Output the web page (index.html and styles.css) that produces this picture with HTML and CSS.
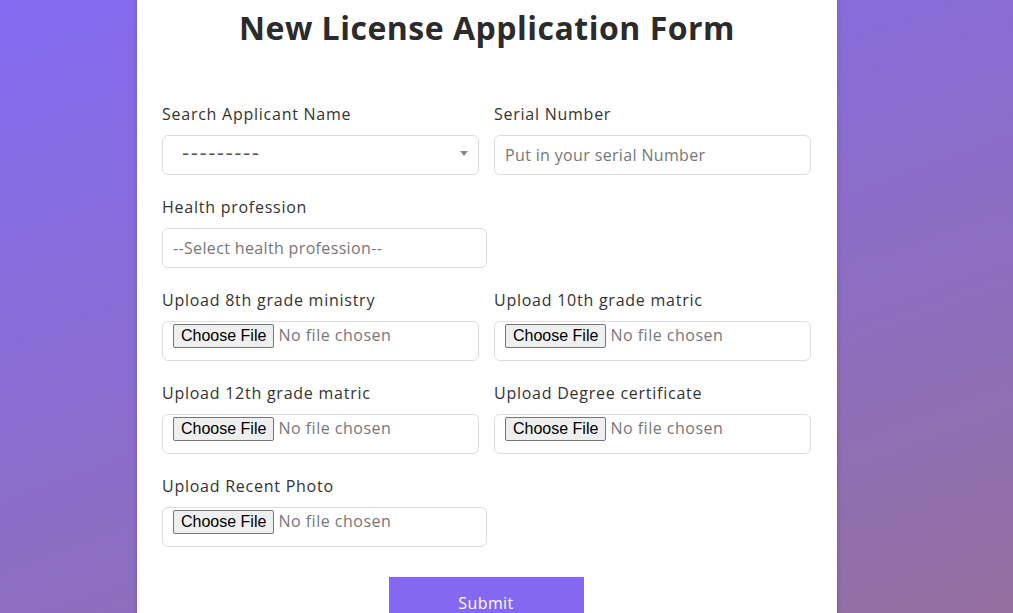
FILE: index.html
```html
<!DOCTYPE html>
<html lang="en">
<head>
<meta charset="utf-8">
<title>New License Application Form</title>
<link rel="stylesheet" href="styles.css">
</head>
<body>
<div class="page">
  <div class="card">
    <h1 class="title">New License Application Form</h1>
    <form class="form">
      <div class="row">
        <div class="field">
          <label class="label">Search Applicant Name</label>
          <div class="select-box">
            <span class="select-text">---------</span>
            <span class="select-arrow"></span>
          </div>
        </div>
        <div class="field">
          <label class="label">Serial Number</label>
          <input class="control" type="text" placeholder="Put in your serial Number">
        </div>
      </div>
      <div class="row single">
        <div class="field">
          <label class="label">Health profession</label>
          <input class="control" type="text" placeholder="--Select health profession--">
        </div>
      </div>
      <div class="row">
        <div class="field">
          <label class="label">Upload 8th grade ministry</label>
          <input class="control file" type="file">
        </div>
        <div class="field">
          <label class="label">Upload 10th grade matric</label>
          <input class="control file" type="file">
        </div>
      </div>
      <div class="row">
        <div class="field">
          <label class="label">Upload 12th grade matric</label>
          <input class="control file" type="file">
        </div>
        <div class="field">
          <label class="label">Upload Degree certificate</label>
          <input class="control file" type="file">
        </div>
      </div>
      <div class="row single">
        <div class="field">
          <label class="label">Upload Recent Photo</label>
          <input class="control file" type="file">
        </div>
      </div>
      <div class="actions">
        <button class="submit" type="button">Submit</button>
      </div>
    </form>
  </div>
</div>
</body>
</html>
```

FILE: styles.css
```css
* { box-sizing: border-box; }
html, body {
  margin: 0;
  height: 100%;
}
body {
  font-family: "Open Sans", "Liberation Sans", sans-serif;
  background: linear-gradient(160deg, #846bf2 0%, #8a6dcf 45%, #9470a0 100%);
  overflow: hidden;
}
.page {
  display: flex;
  justify-content: center;
  min-height: 100%;
}
.card {
  width: 700px;
  margin-left: -39px;
  background: #fff;
  padding: 6px 25px 20px;
  box-shadow: 0 0 6px rgba(60, 40, 120, 0.25);
}
.title {
  margin: 0;
  text-align: center;
  font-size: 32px;
  font-weight: 700;
  color: #2b2b2b;
  line-height: 44px;
  letter-spacing: 0.5px;
}
.form {
  display: flex;
  flex-direction: column;
  margin-top: 53px;
}
.row {
  display: grid;
  grid-template-columns: 317px 317px;
  column-gap: 15px;
  margin-bottom: 21px;
}
.row.single {
  grid-template-columns: 325px;
}
.field {
  display: flex;
  flex-direction: column;
}
.label {
  font-size: 16px;
  line-height: 22px;
  color: #333;
  margin-bottom: 10px;
  letter-spacing: 0.75px;
}
.control {
  height: 40px;
  border: 1px solid #dcdcdc;
  border-radius: 6px;
  padding: 0 10px;
  font-family: inherit;
  font-size: 16px;
  color: #333;
  background: #fff;
  outline: none;
  letter-spacing: 0.35px;
}
.control::placeholder {
  color: #777;
}
.control.file {
  padding: 1px 10px 0;
  color: #777;
  line-height: 24px;
  letter-spacing: 0.5px;
}
.control.file::file-selector-button {
  font-family: "Liberation Sans", Arial, sans-serif;
  font-size: 16px;
  letter-spacing: 0;
  color: #000;
  background: #efefef;
  border: 1px solid #767676;
  border-radius: 2px;
  padding: 1px 7px;
  margin-right: 4px;
  height: 24px;
}
.select-box {
  height: 40px;
  border: 1px solid #dcdcdc;
  border-radius: 6px;
  display: flex;
  align-items: center;
  justify-content: space-between;
  padding: 0 10px 0 19px;
}
.select-text {
  font-family: "DejaVu Sans", sans-serif;
  font-size: 20px;
  color: #555;
  letter-spacing: 1.5px;
  margin-top: -4px;
}
.select-arrow {
  width: 0;
  height: 0;
  border-left: 4px solid transparent;
  border-right: 4px solid transparent;
  border-top: 5px solid #888;
  margin-bottom: 4px;
}
.actions {
  display: flex;
  justify-content: center;
  margin-top: 9px;
}
.submit {
  width: 195px;
  height: 52px;
  border: none;
  background: #8468f2;
  color: #fff;
  font-family: inherit;
  font-size: 16px;
  letter-spacing: 0.4px;
  padding: 0;
  display: flex;
  justify-content: center;
  align-items: flex-start;
  padding-top: 15px;
  margin-left: -2px;
}
```
